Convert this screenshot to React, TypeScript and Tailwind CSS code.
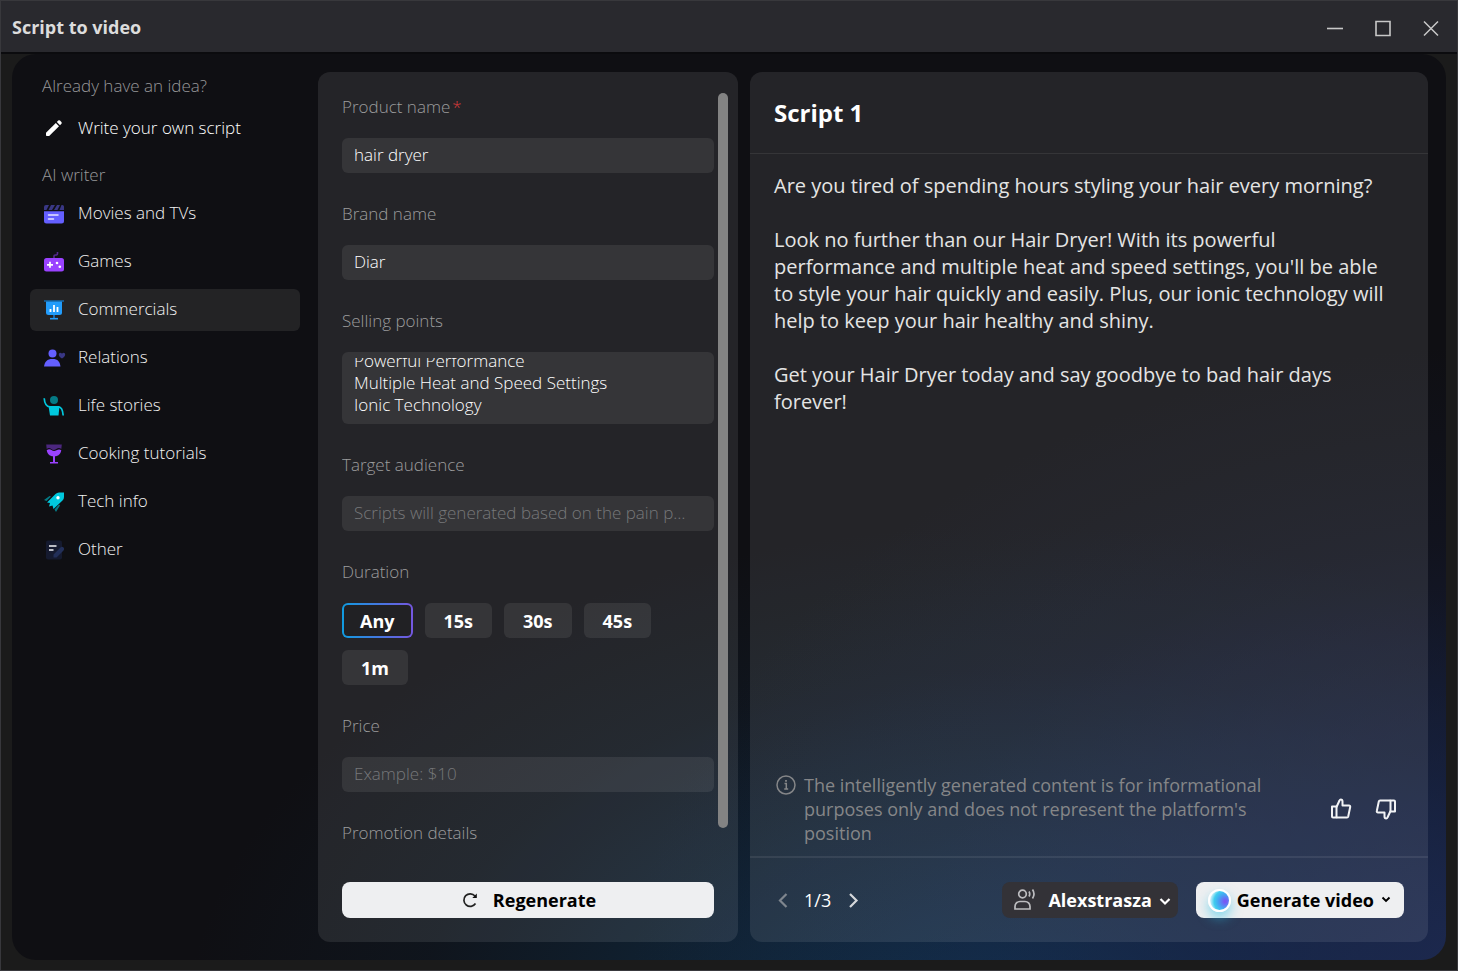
import { useState } from "react";
import type { ReactNode } from "react";

type Category = { name: string; icon: ReactNode };

const categories: Category[] = [
  { name: "Movies and TVs", icon: <MoviesIcon /> },
  { name: "Games", icon: <GamesIcon /> },
  { name: "Commercials", icon: <CommercialsIcon /> },
  { name: "Relations", icon: <RelationsIcon /> },
  { name: "Life stories", icon: <LifeIcon /> },
  { name: "Cooking tutorials", icon: <CookingIcon /> },
  { name: "Tech info", icon: <TechIcon /> },
  { name: "Other", icon: <OtherIcon /> },
];

const durations = ["Any", "15s", "30s", "45s", "1m"];

export default function App() {
  return (
    <div className="flex h-screen flex-col border border-[#38383c] bg-[#1b1b1b] font-['Open_Sans','Noto_Sans',sans-serif] text-white">
      <TitleBar />
      <main className="mx-[11px] mb-[10px] flex min-h-0 flex-1 gap-3 rounded-3xl bg-[#0f0f13] bg-[radial-gradient(ellipse_62%_72%_at_105%_104%,#1e2a52,#1b275099_35%,#1a244a33_70%,transparent),radial-gradient(ellipse_58%_56%_at_70%_108%,#113350,#11304a99_40%,#112c4433_72%,transparent)] p-[18px]">
        <Sidebar />
        <ScriptForm />
        <ScriptPreview />
      </main>
    </div>
  );
}

function TitleBar() {
  return (
    <header className="flex h-[53px] shrink-0 items-center justify-between border-b-2 border-[#0b0b0e] bg-[#29292e] pr-[14px] pl-[11px]">
      <h1 className="text-lg font-bold text-[#dcdcdc]">Script to video</h1>
      <div className="flex gap-6 pt-[2px] text-[#c8c8c8]">
        <button aria-label="Minimize" className="size-6">
          <svg viewBox="0 0 24 24" fill="none" stroke="currentColor" strokeWidth="1.6">
            <path d="M4 12.5h16" />
          </svg>
        </button>
        <button aria-label="Maximize" className="size-6">
          <svg viewBox="0 0 24 24" fill="none" stroke="currentColor" strokeWidth="1.6">
            <path d="M5 5.5h14v14H5z" />
          </svg>
        </button>
        <button aria-label="Close" className="size-6">
          <svg viewBox="0 0 24 24" fill="none" stroke="currentColor" strokeWidth="1.5">
            <path d="M5 5.500l14 14M19 5.500l-14 14" />
          </svg>
        </button>
      </div>
    </header>
  );
}

function Sidebar() {
  const [active, setActive] = useState("Commercials");

  return (
    <nav className="mr-[6px] w-[270px] shrink-0 text-[17px] leading-6 font-light">
      <h2 className="px-3 pt-[2px] text-[#98989a]">Already have an idea?</h2>
      <button className="mt-[9px] flex h-[42px] w-full items-center gap-[14px] rounded-md px-[14px]">
        <PencilIcon />
        Write your own script
      </button>
      <h2 className="mt-[14px] px-3 text-[#98989a]">AI writer</h2>
      <ul className="mt-[6px] flex flex-col gap-[6px]">
        {categories.map(({ name, icon }) => (
          <li key={name}>
            <button
              onClick={() => setActive(name)}
              className={`flex h-[42px] w-full items-center gap-[14px] rounded-md px-[14px] text-[#f2f2f2] ${
                name === active ? "bg-[#232325]" : ""
              }`}
            >
              {icon}
              <span className="pb-[2px]">{name}</span>
            </button>
          </li>
        ))}
      </ul>
    </nav>
  );
}

function ScriptForm() {
  const [duration, setDuration] = useState("Any");

  return (
    <section className="flex w-[420px] shrink-0 flex-col rounded-xl bg-white/9 pb-6">
      <div className="mt-[21px] mb-6 flex min-h-0 flex-1 gap-1 pr-[10px] pl-6">
        <form className="flex min-w-0 flex-1 flex-col gap-[29px] overflow-hidden pt-[2px] text-[17px] leading-6 font-light">
          <Field id="product" label="Product name" required>
            <input id="product" defaultValue="hair dryer" className={inputClass} />
          </Field>
          <Field id="brand" label="Brand name">
            <input id="brand" defaultValue="Diar" className={inputClass} />
          </Field>
          <Field id="points" label="Selling points">
            <div className="h-[72px] rounded-md bg-white/8 px-3 py-[6px]">
              <textarea
                id="points"
                ref={(el) => {
                  if (el) el.scrollTop = el.scrollHeight;
                }}
                defaultValue={
                  "Powerful Performance\nMultiple Heat and Speed Settings\nIonic Technology"
                }
                className="block h-[60px] w-full resize-none [scrollbar-width:none] pb-[2px] leading-[22px] outline-none"
              />
            </div>
          </Field>
          <Field id="audience" label="Target audience">
            <input
              id="audience"
              placeholder="Scripts will generated based on the pain points of the audience"
              className={inputClass}
            />
          </Field>
          <fieldset>
            <legend className="mb-[19px] text-[#9c9c9d]">Duration</legend>
            <div className="flex flex-wrap gap-3">
              {durations.map((d) => (
                <button
                  key={d}
                  type="button"
                  aria-pressed={d === duration}
                  onClick={() => setDuration(d)}
                  className={`h-[35px] rounded-md border-2 border-transparent text-lg leading-6 font-bold ${
                    d === duration
                      ? "px-4 [background:linear-gradient(#212124,#212124)_padding-box,linear-gradient(90deg,#109be0,#7557e0)_border-box]"
                      : "bg-white/8 px-[17px]"
                  }`}
                >
                  {d}
                </button>
              ))}
            </div>
          </fieldset>
          <Field id="price" label="Price">
            <input id="price" placeholder="Example: $10" className={inputClass} />
          </Field>
          <Field id="promotion" label="Promotion details">
            <input id="promotion" className={inputClass} />
          </Field>
        </form>
        <div className="mb-[30px] w-[10px] rounded-full bg-[#838383]" />
      </div>
      <button className="mx-6 flex h-9 shrink-0 items-center justify-center gap-[13px] rounded-lg bg-[#eeeff1] text-lg font-bold text-black">
        <svg viewBox="0 0 20 20" className="size-5" fill="none" stroke="#222" strokeWidth="1.7">
          <path d="M15.500 13.500A6.300 6.300 0 1 1 15 6" />
          <path d="M16.800 3.500v4.500h-4.500z" fill="#111" stroke="none" />
        </svg>
        Regenerate
      </button>
    </section>
  );
}

const inputClass =
  "block h-[35px] w-full text-ellipsis rounded-md bg-white/8 pr-6 pb-[2px] pl-3 outline-none placeholder:text-[#77787a]";

type FieldProps = {
  id: string;
  label: string;
  required?: boolean;
  children: ReactNode;
};

function Field({ id, label, required, children }: FieldProps) {
  return (
    <div className="flex shrink-0 flex-col gap-[19px]">
      <label htmlFor={id} className="text-[#9c9c9d]">
        {label}
        {required && <span className="ml-[2px] text-[#d83a3a]">*</span>}
      </label>
      {children}
    </div>
  );
}

function ScriptPreview() {
  return (
    <section className="flex min-w-0 flex-1 flex-col rounded-xl bg-white/9">
      <h2 className="flex h-[82px] shrink-0 items-center border-b border-white/8 px-6 text-2xl font-bold">
        Script 1
      </h2>
      <div className="flex flex-1 flex-col gap-[27px] pt-[18px] pr-9 pl-6 text-xl leading-[27px] text-[#e4e4e4]">
        <p>Are you tired of spending hours styling your hair every morning?</p>
        <p>
          Look no further than our Hair Dryer! With its powerful performance and
          multiple heat and speed settings, you'll be able to style your hair
          quickly and easily. Plus, our ionic technology will help to keep your
          hair healthy and shiny.
        </p>
        <p>Get your Hair Dryer today and say goodbye to bad hair days forever!</p>
      </div>

      <div className="flex items-center justify-between pr-[30px] pb-[11px] pl-6">
        <div className="flex gap-[6px] text-[#858688]">
          <InfoIcon />
          <p className="w-[490px] text-lg leading-6">
            The intelligently generated content is for informational purposes
            only and does not represent the platform's position
          </p>
        </div>
        <div className="flex gap-[21px]">
          <button aria-label="Like">
            <ThumbIcon />
          </button>
          <button aria-label="Dislike" className="rotate-180">
            <ThumbIcon />
          </button>
        </div>
      </div>

      <footer className="flex h-[86px] shrink-0 items-center justify-between border-t-2 border-white/8 px-6">
        <div className="flex items-center gap-3 text-lg">
          <button aria-label="Previous script" className="text-[#7f868e]">
            <Chevron d="M12.500 4L6 10.500l6.500 6.500" />
          </button>
          1/3
          <button aria-label="Next script" className="text-[#d5d7da]">
            <Chevron d="M7 4l6.500 6.500L7 17" />
          </button>
        </div>
        <div className="flex gap-[18px] text-lg font-bold">
          <button className="flex h-9 items-center rounded-lg bg-[#333237] pr-[6px] pl-[10px]">
            <VoiceIcon />
            <span className="ml-3">Alexstrasza</span>
            <svg viewBox="0 0 14 14" className="ml-[6px] size-[14px]" fill="none" stroke="currentColor" strokeWidth="2.200">
              <path d="M2.500 6L7 10.500l4.500-4.500" />
            </svg>
          </button>
          <button className="flex h-9 items-center rounded-lg bg-[#eeeff1] pr-3 pl-3 text-black">
            <span className="size-[23px] rounded-full border-2 border-white bg-[radial-gradient(circle_at_80%_55%,#7857f5_5%,#45a5f2_38%,#3fcdee_60%,#d5f2fb_82%)] shadow-[0_6px_12px_#27c3e788]" />
            <span className="ml-[6px]">Generate video</span>
            <svg viewBox="0 0 12 12" className="ml-[6px] size-3" fill="none" stroke="currentColor" strokeWidth="1.900">
              <path d="M2.500 3.500L6 7l3.500-3.500" />
            </svg>
          </button>
        </div>
      </footer>
    </section>
  );
}

// ── icons ──────────────────────────────────────────
function Chevron({ d }: { d: string }) {
  return (
    <svg viewBox="0 0 18 21" className="h-[21px] w-[18px]" fill="none" stroke="currentColor" strokeWidth="2.200">
      <path d={d} />
    </svg>
  );
}

function PencilIcon() {
  return (
    <svg viewBox="0 0 20 20" className="size-5" fill="#fff">
      <path d="M2 14.800 11.800 5 15 8.200 5.200 18H2.800a.8.8 0 0 1-.8-.8z" />
      <path d="m12.800 4 1.400-1.400a1.300 1.300 0 0 1 1.800 0l1.400 1.400a1.300 1.300 0 0 1 0 1.800L16 7.200z" />
    </svg>
  );
}

function MoviesIcon() {
  return (
    <svg viewBox="0 0 20 20" className="size-5">
      <path d="M2 1h3L2.500 6H0V3a2 2 0 0 1 2-2zM7 1h4L8 6H4.500zM13 1h3l-2.500 5H10zM17.500 1A2 2 0 0 1 20 3v3h-4.500z" fill="#393785" />
      <path d="M0 7.300h20V17a2.500 2.500 0 0 1-2.500 2.500h-15A2.500 2.500 0 0 1 0 17z" fill="#645fff" />
      <path d="M4.500 11h9.500M4.500 15h5" stroke="#e6e5ff" strokeWidth="1.500" strokeLinecap="round" />
    </svg>
  );
}

function GamesIcon() {
  return (
    <svg viewBox="0 0 20 20" className="size-5">
      <path d="M10 7V4q0-1 1.300-1h1Q13.500 3 13.500 1V0" fill="none" stroke="#54298c" strokeWidth="1.600" />
      <rect y="6" width="20" height="13.500" rx="2.500" fill="#9a42ff" />
      <path d="M6 9.800v6M3 12.800h6" stroke="#fff" strokeWidth="1.700" />
      <circle cx="13" cy="11" r="1.300" fill="#fff" />
      <circle cx="15.800" cy="14.800" r="1.300" fill="#fff" />
    </svg>
  );
}

function CommercialsIcon() {
  return (
    <svg viewBox="0 0 20 20" className="size-5">
      <path d="M2 1h16v11.500a2.500 2.500 0 0 1-2.500 2.500h-11A2.500 2.500 0 0 1 2 12.500z" fill="#229cfb" />
      <path d="M0 .3h20v1.500H0zM9 15h2v3H9z" fill="#1769aa" />
      <path d="M6 18.700h8" stroke="#229cfb" strokeWidth="1.600" />
      <path d="M6.500 9v3M10 5v7M13.500 7v5" stroke="#fff" strokeWidth="1.800" />
    </svg>
  );
}

function RelationsIcon() {
  return (
    <svg viewBox="0 0 20 20" className="size-5 overflow-visible">
      <circle cx="8.500" cy="5.500" r="4" fill="#645fff" />
      <path d="M0 18.500C.8 13.500 3 11 8.500 11s7.200 2.500 8 7.500z" fill="#645fff" />
      <path d="M18 10.500C13.300 7.800 14.800 4.800 16.400 4.800c.9 0 1.600.9 1.600.9s.7-.9 1.600-.9C21.200 4.800 22.700 7.800 18 10.500z" fill="#393785" />
    </svg>
  );
}

function LifeIcon() {
  return (
    <svg viewBox="0 0 20 20" className="size-5 overflow-visible">
      <circle cx="10" cy="4" r="4" fill="#057a85" />
      <path d="M.2 2.200C.5 6.500 2 10.500 6 10.800h8.500c3 .2 4.300 3 4.700 8.700" fill="none" stroke="#00c8de" strokeWidth="1.700" />
      <path d="M4.500 10h11l-1 9.500H6z" fill="#00c8de" />
    </svg>
  );
}

function CookingIcon() {
  return (
    <svg viewBox="0 0 20 20" className="size-5">
      <path d="M2.200.5h15.600l-.5 4.500q-2.300-2-5 0t-5 0-4.600 0z" fill="#4c277f" />
      <path d="M2.700 6.200q2.500-2 4.800-.2t5 .2 4.800 0C16.500 10.500 14 12 11 12.300V18h3v1.500H6V18h3v-5.700C6 12 3.500 10.500 2.700 6.200z" fill="#9a42ff" />
    </svg>
  );
}

function TechIcon() {
  return (
    <svg viewBox="0 0 20 20" className="size-5">
      <path d="M5.500 4 0 8l2.500 1L7 4.500zM16 13.500 12 20l-1.500-2.500 4.500-5z" fill="#057a85" />
      <path d="M20 .5h-5Q13 .5 11.500 2L3 10.500l3 .500-1 3.500 3.500-1 1 3.500L18.500 8.500Q20 7 20 5z" fill="#00c8de" />
      <circle cx="14" cy="5.800" r="1.700" fill="#fff" />
    </svg>
  );
}

function OtherIcon() {
  return (
    <svg viewBox="0 0 20 20" className="size-5">
      <rect x="2" y=".5" width="16" height="19" rx="2" fill="#151a2f" />
      <path d="M5 6h7.500M5 10h4.500" stroke="#f1f2f6" strokeWidth="1.500" />
      <path d="M9.500 17.500v-3l7-7a2 2 0 0 1 3 3l-7 7z" fill="#222f58" />
    </svg>
  );
}

function InfoIcon() {
  return (
    <svg viewBox="0 0 24 24" className="size-6 shrink-0" fill="none" stroke="currentColor" strokeWidth="1.500">
      <circle cx="12" cy="12" r="9" />
      <path d="M10.500 10.500h1.800v5.500M10.200 16h4" />
      <path d="M12 7v1.800" strokeWidth="1.800" />
    </svg>
  );
}

function ThumbIcon() {
  return (
    <svg viewBox="0 0 24 24" className="size-6" fill="none" stroke="#f2f3f5" strokeWidth="2" strokeLinejoin="round">
      <path d="M3 9.500h4.500V20.500H4a1 1 0 0 1-1-1z" />
      <path d="M7.500 10 10.500 3.500q.4-1 1.300-1 1.700 0 1.700 2V8.500H20a1.200 1.200 0 0 1 1.200 1.500l-2 9.500a1.300 1.300 0 0 1-1.300 1H7.500" />
    </svg>
  );
}

function VoiceIcon() {
  return (
    <svg viewBox="0 0 24 24" className="size-6" fill="none" stroke="#bdbdc0" strokeWidth="1.700">
      <circle cx="10.500" cy="6" r="3.800" />
      <path d="M3 21v-2.500a5 5 0 0 1 5-5h5a5 5 0 0 1 5 5V21z" />
      <path d="M17 3.500q1.500 2.500 0 5M20.500 1.500q3 4.500 0 9" />
    </svg>
  );
}
